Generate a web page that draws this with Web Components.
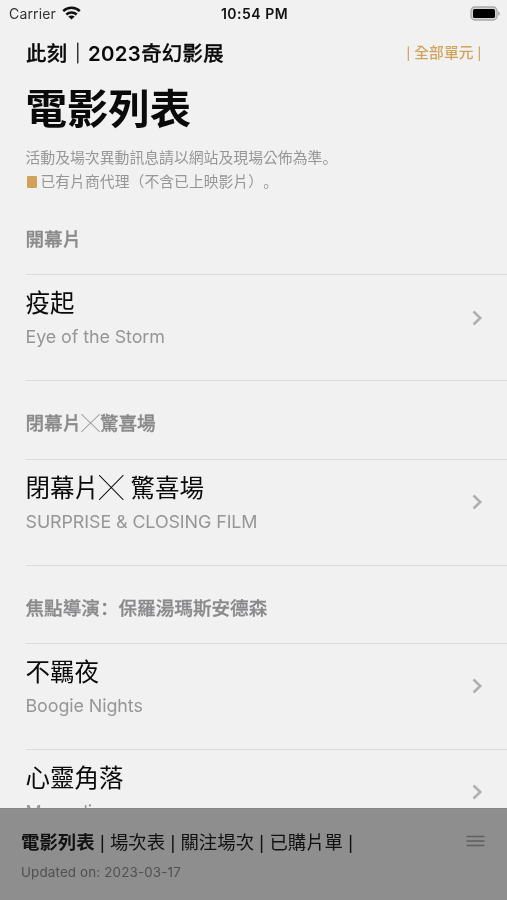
<!DOCTYPE html>
<html lang="zh-Hant">
<head>
<meta charset="utf-8">
<meta name="viewport" content="width=device-width">
<title>電影列表</title>
<style>
html,body{margin:0;height:100%;overflow:hidden;background:#f1f1f1}
body{font-family:Inter,"Noto Sans CJK TC",sans-serif;color:#0a0a0a;text-spacing-trim:space-all}
.p{font-family:"Noto Sans CJK SC",sans-serif;line-height:0}
.x{font-family:"Noto Sans CJK TC",sans-serif;font-weight:300;line-height:0}
.n{font-weight:600;-webkit-text-stroke:0}
.s{font-size:.82em;margin:0 .04em;font-weight:500}
.swatch{display:inline-block;width:10px;height:12px;border-radius:1px;background:#cfa35a;margin:0 4px 0 1px;vertical-align:-1px}
</style>
</head>
<body>
<film-app>
  <status-bar slot="status" carrier="Carrier" time="10:54 PM"></status-bar>
  <list-header slot="header">
    <span slot="event">此刻｜<span class="n">2023</span>奇幻影展</span>
    <span slot="filter"><span class="s">|</span> 全部單元 <span class="s">|</span></span>
    <span slot="title">電影列表</span>
    <span slot="note">活動及場次異動訊息請以網站及現場公佈為準<span class="p" lang="zh-Hans">。</span></span>
    <span slot="legend"><i class="swatch"></i>已有片商代理（不含已上映影片）<span class="p" lang="zh-Hans">。</span></span>
  </list-header>
  <film-section>
    <span slot="label">開幕片</span>
    <film-row>疫起<span slot="sub">Eye of the Storm</span></film-row>
  </film-section>
  <film-section>
    <span slot="label">閉幕片<span class="x" style="-webkit-text-stroke:0">╳</span>驚喜場</span>
    <film-row>閉幕片<span class="x">╳</span> 驚喜場<span slot="sub">SURPRISE &amp; CLOSING FILM</span></film-row>
  </film-section>
  <film-section>
    <span slot="label">焦點導演<span class="p" lang="zh-Hans">：</span>保羅湯瑪斯安德森</span>
    <film-row>不羈夜<span slot="sub">Boogie Nights</span></film-row>
    <film-row>心靈角落<span slot="sub">Magnolia</span></film-row>
  </film-section>
  <tab-footer slot="footer">
    <b>電影列表</b> <span class="s">|</span> 場次表 <span class="s">|</span> 關注場次 <span class="s">|</span> 已購片單 <span class="s">|</span>
    <span slot="updated">Updated on: 2023-03-17</span>
  </tab-footer>
</film-app>
<script>
const define = (name, html) => customElements.define(name, class extends HTMLElement {
  constructor() {
    super();
    this.attachShadow({mode: 'open'}).innerHTML = html;
  }
  connectedCallback() {
    for (const el of this.shadowRoot.querySelectorAll('[data-attr]'))
      el.textContent = this.getAttribute(el.dataset.attr) || '';
  }
});

define('film-app', `
<style>
:host{display:flex;flex-direction:column;width:100%;height:100vh;overflow:hidden;will-change:transform}
main{flex:1;min-height:0;overflow:hidden}
</style>
<slot name="status"></slot>
<main><slot name="header"></slot><slot></slot></main>
<slot name="footer"></slot>`);

define('status-bar', `
<style>
:host{display:grid;grid-template-columns:1fr auto 1fr;align-items:center;height:28px;flex:none;padding:0 7px 0 9px;font-size:14px;line-height:28px;color:#111}
.l{display:flex;align-items:center;gap:6px;color:#333;letter-spacing:.16px}
.l svg{margin-top:-2px}
.t{font-weight:600;letter-spacing:.5px;color:#111}
.b{justify-self:end;display:block;margin-top:-2px}
</style>
<div class="l"><span data-attr="carrier"></span>
<svg width="19" height="14" viewBox="0 0 19 14" fill="none" stroke="#111" stroke-width="2.5"><path d="M1.2 5.2C5.8.7 13.2.7 17.8 5.2M4.3 8.5c2.9-2.8 7.5-2.8 10.4 0"/><path d="M9.5 13.6 6.3 10.6c1.8-1.6 4.6-1.6 6.4 0z" fill="#111" stroke="none"/></svg></div>
<span class="t" data-attr="time"></span>
<svg class="b" width="30" height="15" viewBox="0 0 30 15"><rect x="1" y="1" width="26" height="13" rx="3.8" fill="#d4d4d4" stroke="#a9a9a9" stroke-width="1.3"/><rect x="3" y="3" width="22" height="9" rx="1.6" fill="#000"/><path d="M28.2 5.2c2.2.8 2.2 3.8 0 4.6z" fill="#a9a9a9"/></svg>`);

define('list-header', `
<style>
:host{display:block;padding:0 25px 0 26px}
.top{display:flex;justify-content:space-between;align-items:center;height:48px}
.event{font-size:20.4px;font-weight:500;letter-spacing:.3px;-webkit-text-stroke:.3px}
.filter{font-size:14.8px;font-weight:500;color:#cfa35a;margin-top:-2px;word-spacing:-.6px}
.title{font-size:41.4px;font-weight:700;line-height:60px;padding-top:3px;margin-left:-.5px}
.note{font-size:14.85px;line-height:23.5px;height:23.5px;color:#969696;font-weight:400;white-space:nowrap;margin-left:-.5px}
.notes{box-sizing:border-box;height:56.8px;padding-top:8px}
</style>
<div class="top"><div class="event"><slot name="event"></slot></div><div class="filter"><slot name="filter"></slot></div></div>
<div class="title"><slot name="title"></slot></div>
<div class="notes"><div class="note"><slot name="note"></slot></div><div class="note"><slot name="legend"></slot></div></div>`);

define('film-section', `
<style>
:host{display:block}
.label{height:78.4px;box-sizing:border-box;padding:29px 0 0 25.5px;font-size:18.6px;line-height:28px;font-weight:500;color:#8a8a8c;-webkit-text-stroke:.3px}
</style>
<div class="label"><slot name="label"></slot></div><slot></slot>`);

define('film-row', `
<style>
:host{display:flex;align-items:center;box-sizing:border-box;height:106px;margin-left:26px;padding-right:24px;border-top:1px solid #dcdcdc;position:relative}
:host(:last-child){box-shadow:0 1px 0 #dcdcdc}
.text{flex:1;align-self:flex-start;padding-top:10px;margin-left:-.5px}
.name{font-size:24.5px;line-height:36px;color:#0a0a0a}
.sub{font-size:17.9px;line-height:28px;margin-top:2px;color:#969696;letter-spacing:-.09px}
svg{margin-bottom:20px;display:block}
</style>
<div class="text"><div class="name"><slot></slot></div><div class="sub"><slot name="sub"></slot></div></div>
<svg width="12" height="18" viewBox="0 0 12 18" fill="none" stroke="#b0b0b0" stroke-width="2.5"><path d="m2.5 2.5 6.8 6.5-6.8 6.5"/></svg>`);

define('tab-footer', `
<style>
:host{display:block;flex:none;box-sizing:border-box;height:92px;padding:17px 22px 0 21px;background:#8e8e8e;border-top:1px solid #868686;position:relative}
.row{display:flex;justify-content:space-between;align-items:center;height:30px;font-size:18.4px;color:#111;white-space:nowrap;word-spacing:-.7px}
.upd{font-size:13.4px;line-height:22px;margin-top:5px;color:#505050;letter-spacing:.15px}
svg{display:block}
</style>
<div class="row"><span><slot></slot></span>
<svg width="19" height="12" viewBox="0 0 19 12" stroke="#5f5f5f" stroke-width="1.5"><path d="M.5 1.5h18M.5 6h18M.5 10.5h18"/></svg></div>
<div class="upd"><slot name="updated"></slot></div>`);
</script>
</body>
</html>
